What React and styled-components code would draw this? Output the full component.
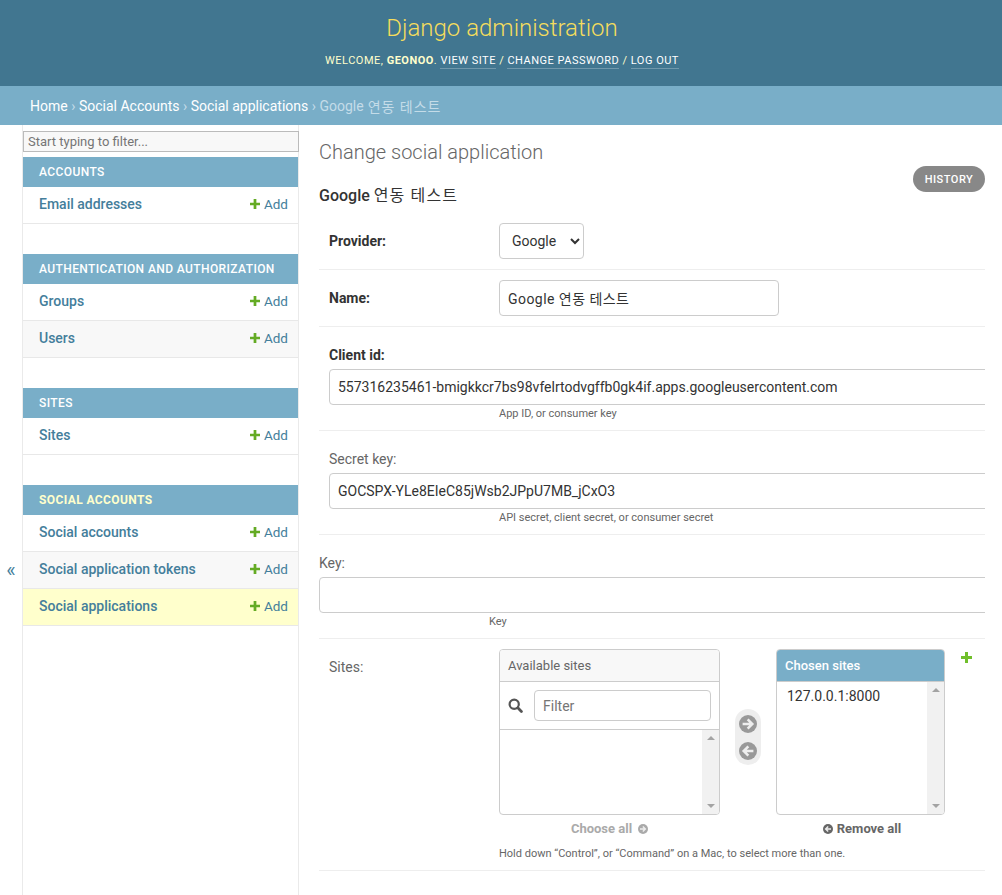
import React from 'react';
import styled, { createGlobalStyle } from 'styled-components';

const FONT = `Roboto, "Noto Sans CJK KR", "Lucida Grande", Verdana, Arial, sans-serif`;

const GlobalStyle = createGlobalStyle`
    html, body {
        margin: 0;
        height: 100%;
        overflow: hidden;
        background: #fff;
    }
    body, input, select {
        font-family: ${FONT};
        font-size: 14px;
        color: #333;
    }
    * {
        box-sizing: border-box;
    }
`;

const groups = [
    { title: 'Accounts', rows: ['Email addresses'] },
    { title: 'Authentication and Authorization', rows: ['Groups', 'Users'] },
    { title: 'Sites', rows: ['Sites'] },
    { title: 'Social Accounts', rows: ['Social accounts', 'Social application tokens', 'Social applications'], current: 'Social applications' },
];

const PlusIcon = ({ size = 10, color = '#64ab24' }) => (
    <svg width={size} height={size} viewBox="0 0 11 11" aria-hidden="true">
        <path d="M4 0h3v4h4v3H7v4H4V7H0V4h4z" fill={color} />
    </svg>
);

const SearchIcon = () => (
    <svg width="15" height="15" viewBox="0 0 15 15" aria-hidden="true">
        <circle cx="6.2" cy="6.2" r="4.6" fill="none" stroke="#555" strokeWidth="2.2" />
        <path d="M9.8 9.8l3.6 3.6" stroke="#555" strokeWidth="2.8" strokeLinecap="round" />
    </svg>
);

const ArrowCircle = ({ size = 18, color = '#999', left }) => (
    <svg width={size} height={size} viewBox="0 0 20 20" aria-hidden="true" style={{ transform: left ? 'scaleX(-1)' : undefined }}>
        <circle cx="10" cy="10" r="10" fill={color} />
        <path d="M4 10h10M9.6 4.8l5.2 5.2-5.2 5.2" fill="none" stroke="#eee" strokeWidth="2.8" />
    </svg>
);

const Header = styled.header`
    height: 86px;
    background: #417690;
    padding-top: 12px;
    padding-left: 2px;
    text-align: center;
`;

const Branding = styled.h1`
    margin: 0;
    font-size: 24px;
    line-height: 32px;
    font-weight: 300;
    color: #f5dd5d;
`;

const UserTools = styled.div`
    margin-top: 10px;
    font-size: 11px;
    line-height: 14px;
    letter-spacing: 0.5px;
    text-transform: uppercase;
    color: #ffc;
    strong {
        font-weight: 700;
    }
    a {
        color: #fff;
        border-bottom: 1px solid rgba(255, 255, 255, 0.25);
        padding-bottom: 1px;
    }
`;

const Breadcrumbs = styled.nav`
    height: 39px;
    background: #79aec8;
    padding: 0 30px;
    display: flex;
    align-items: center;
    font-size: 14px;
    color: #c4dce8;
    a {
        color: #fff;
    }
    i {
        font-style: normal;
        margin: 0 3.5px;
        color: #c4dce8;
    }
`;

const Korean = styled.span`
    margin-left: 4px;
    font-weight: 400;
    letter-spacing: 0.07em;
`;

const Body = styled.div`
    display: flex;
    height: calc(100vh - 125px);
`;

const ToggleColumn = styled.div`
    width: 22px;
    flex: none;
    display: flex;
    justify-content: center;
    align-items: center;
    color: #447e9b;
    font-size: 20px;
    padding-top: 119px;
`;

const Sidebar = styled.aside`
    width: 277px;
    flex: none;
    border-left: 1px solid #eaeaea;
    border-right: 1px solid #eaeaea;
    padding-top: 6px;
`;

const NavFilter = styled.input`
    display: block;
    width: 276px;
    height: 21px;
    margin: 0 0 5px;
    padding: 0 4px;
    font-size: 13px;
    background: #f8f8f8;
    border: 1px solid #bbb;
    border-radius: 0;
    outline: none;
    &::placeholder {
        color: #757575;
        opacity: 1;
    }
`;

const NavGroup = styled.section`
    margin-bottom: 30px;
`;

const Caption = styled.div`
    height: 30px;
    width: 275px;
    padding: 0 16px;
    display: flex;
    align-items: center;
    background: #79aec8;
    font-size: 12px;
    letter-spacing: 0.4px;
    text-transform: uppercase;
    font-weight: ${p => (p.$current ? 700 : 500)};
    color: ${p => (p.$current ? '#ffc' : '#fff')};
`;

const NavRow = styled.div`
    height: 37px;
    width: 275px;
    padding: 0 10px 3px 16px;
    display: flex;
    align-items: center;
    justify-content: space-between;
    color: #447e9b;
    border-bottom: 1px solid #e8e8e8;
    background: ${p => (p.$current ? '#ffc' : p.$alt ? '#f8f8f8' : '#fff')};
`;

const ModelLink = styled.span`
    font-weight: 500;
`;

const AddLink = styled.span`
    display: flex;
    align-items: center;
    gap: 4px;
    font-size: 13.5px;
    padding-top: 1px;
`;

const Content = styled.main`
    flex: 1;
    min-width: 0;
    padding: 15px 17px 0 20px;
    overflow: hidden;
`;

const TitleBar = styled.div`
    display: flex;
    justify-content: space-between;
    align-items: flex-start;
`;

const Title = styled.h1`
    margin: 0;
    font-size: 20px;
    line-height: 24px;
    font-weight: 300;
    color: #666;
`;

const Subtitle = styled.h2`
    margin: 22px 0 0;
    font-size: 16px;
    line-height: 20px;
    font-weight: 500;
    color: #333;
`;

const HistoryButton = styled.a`
    margin-top: 26px;
    width: 72px;
    height: 26px;
    border-radius: 13px;
    background: #888;
    color: #fff;
    font-size: 11px;
    font-weight: 500;
    letter-spacing: 0.5px;
    display: flex;
    align-items: center;
    justify-content: center;
`;

const FormRow = styled.div`
    padding: ${p => p.$pad || '10px'};
    border-bottom: 1px solid #eee;
    overflow: hidden;
    display: ${p => (p.$inline ? 'flex' : 'block')};
    align-items: center;
`;

const Label = styled.label`
    display: block;
    width: ${p => (p.$inline ? '170px' : 'auto')};
    flex: none;
    font-weight: ${p => (p.$required ? 700 : 400)};
    font-size: 14px;
    line-height: 16px;
    color: ${p => (p.$required ? '#333' : '#666')};
    margin-top: ${p => (p.$top ? '10px' : 0)};
    margin-bottom: ${p => (p.$inline ? 0 : '6px')};
`;

const Select = styled.select`
    height: 36px;
    width: 85px;
    padding: 0 4px 0 8px;
    font-size: 14px;
    background: #fff;
    border: 1px solid #ccc;
    border-radius: 4px;
`;

const TextInput = styled.input`
    display: block;
    height: 36px;
    width: ${p => p.$width || '700px'};
    padding: 0 8px;
    font-size: 14px;
    letter-spacing: ${p => p.$spacing || 'normal'};
    border: 1px solid #ccc;
    border-radius: 4px;
    outline: none;
`;

const Help = styled.div`
    margin: 2px 0 0 ${p => p.$left || '170px'};
    font-size: 11px;
    line-height: 13px;
    color: #666;
`;

const Selector = styled.div`
    display: flex;
    align-items: flex-start;
`;

const SelectorColumn = styled.div`
    width: ${p => p.$width};
`;

const Box = styled.div`
    height: 166px;
    border: 1px solid #ccc;
    border-radius: 4px;
    display: flex;
    flex-direction: column;
    overflow: hidden;
`;

const BoxTitle = styled.div`
    flex: none;
    height: 32px;
    padding: 0 8px;
    display: flex;
    align-items: center;
    font-size: 13px;
    border-bottom: 1px solid #ccc;
    background: ${p => (p.$chosen ? '#79aec8' : '#f8f8f8')};
    color: ${p => (p.$chosen ? '#fff' : '#666')};
    font-weight: ${p => (p.$chosen ? 500 : 400)};
`;

const FilterBar = styled.div`
    flex: none;
    height: 48px;
    padding: 0 8px;
    display: flex;
    align-items: center;
    gap: 11px;
    border-bottom: 1px solid #ccc;
`;

const FilterInput = styled.input`
    width: 177px;
    height: 31px;
    padding: 0 8px;
    font-size: 14px;
    border: 1px solid #ccc;
    border-radius: 4px;
    outline: none;
    &::placeholder {
        color: #757575;
        opacity: 1;
    }
`;

const ListArea = styled.div`
    flex: 1;
    min-height: 0;
    display: flex;
`;

const Items = styled.div`
    flex: 1;
    padding: 4px 10px;
    font-size: 14px;
    line-height: 20px;
    color: #333;
`;

const Scrollbar = styled.div`
    width: 17px;
    flex: none;
    background: #f1f1f1;
    display: flex;
    flex-direction: column;
    justify-content: space-between;
    align-items: center;
    padding: 6px 0;
`;

const Arrow = styled.span`
    width: 0;
    height: 0;
    border-left: 4px solid transparent;
    border-right: 4px solid transparent;
    border-${p => (p.$down ? 'top' : 'bottom')}: 4px solid #a3a3a3;
`;

const Mover = styled.div`
    width: 26px;
    height: 56px;
    margin: 60px 15px 0;
    border-radius: 13px;
    background: #eee;
    display: flex;
    flex-direction: column;
    align-items: center;
    justify-content: center;
    gap: 9px;
    flex: none;
`;

const ChooseLink = styled.div`
    margin-top: 6px;
    padding-left: ${p => (p.$off ? 0 : '3px')};
    display: flex;
    justify-content: center;
    align-items: center;
    gap: ${p => (p.$off ? '6px' : '4px')};
    font-size: 13px;
    line-height: 16px;
    font-weight: 700;
    color: ${p => (p.$off ? '#aaa' : '#666')};
`;

const AddAnother = styled.span`
    margin: 3px 0 0 16px;
    line-height: 0;
`;

const SelectorHelp = styled.div`
    margin: 10px 0 0 170px;
    font-size: 11px;
    line-height: 13px;
    color: #666;
`;

const Scroll = () => (
    <Scrollbar>
        <Arrow />
        <Arrow $down />
    </Scrollbar>
);

const App = () => {
    return (
        <>
            <GlobalStyle />
            <Header>
                <Branding>Django administration</Branding>
                <UserTools>
                    Welcome, <strong>geonoo</strong>. <a>View site</a> / <a>Change password</a> / <a>Log out</a>
                </UserTools>
            </Header>
            <Breadcrumbs>
                <a>Home</a><i>›</i><a>Social Accounts</a><i>›</i><a>Social applications</a><i>›</i>Google<Korean>연동 테스트</Korean>
            </Breadcrumbs>
            <Body>
                <ToggleColumn>«</ToggleColumn>
                <Sidebar>
                    <NavFilter placeholder="Start typing to filter..." />
                    {groups.map(group => (
                        <NavGroup key={group.title}>
                            <Caption $current={!!group.current}>{group.title}</Caption>
                            {group.rows.map((row, i) => (
                                <NavRow key={row} $alt={i % 2 === 1} $current={row === group.current}>
                                    <ModelLink>{row}</ModelLink>
                                    <AddLink><PlusIcon />Add</AddLink>
                                </NavRow>
                            ))}
                        </NavGroup>
                    ))}
                </Sidebar>
                <Content>
                    <TitleBar>
                        <div>
                            <Title>Change social application</Title>
                            <Subtitle>Google<Korean>연동 테스트</Korean></Subtitle>
                        </div>
                        <HistoryButton>HISTORY</HistoryButton>
                    </TitleBar>
                    <FormRow $inline $pad="17px 10px 10px">
                        <Label $inline $required>Provider:</Label>
                        <Select defaultValue="google"><option value="google">Google</option></Select>
                    </FormRow>
                    <FormRow $inline>
                        <Label $inline $required>Name:</Label>
                        <TextInput $width="280px" $spacing="0.45px" defaultValue="Google 연동 테스트" />
                    </FormRow>
                    <FormRow $pad="20px 0 10px 10px">
                        <Label $required>Client id:</Label>
                        <TextInput defaultValue="557316235461-bmigkkcr7bs98vfelrtodvgffb0gk4if.apps.googleusercontent.com" />
                        <Help>App ID, or consumer key</Help>
                    </FormRow>
                    <FormRow $pad="20px 0 10px 10px">
                        <Label>Secret key:</Label>
                        <TextInput defaultValue="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" />
                        <Help>API secret, client secret, or consumer secret</Help>
                    </FormRow>
                    <FormRow $pad="20px 0 10px 0">
                        <Label>Key:</Label>
                        <TextInput />
                        <Help>Key</Help>
                    </FormRow>
                    <FormRow $pad="10px 10px 10px">
                        <Selector>
                            <Label $inline $top>Sites:</Label>
                            <SelectorColumn $width="221px">
                                <Box>
                                    <BoxTitle>Available sites</BoxTitle>
                                    <FilterBar>
                                        <SearchIcon />
                                        <FilterInput placeholder="Filter" />
                                    </FilterBar>
                                    <ListArea>
                                        <Items />
                                        <Scroll />
                                    </ListArea>
                                </Box>
                                <ChooseLink $off>Choose all <ArrowCircle size={10} color="#aaa" /></ChooseLink>
                            </SelectorColumn>
                            <Mover>
                                <ArrowCircle />
                                <ArrowCircle left />
                            </Mover>
                            <SelectorColumn $width="169px">
                                <Box>
                                    <BoxTitle $chosen>Chosen sites</BoxTitle>
                                    <ListArea>
                                        <Items>127.0.0.1:8000</Items>
                                        <Scroll />
                                    </ListArea>
                                </Box>
                                <ChooseLink><ArrowCircle size={10} color="#666" left /> Remove all</ChooseLink>
                            </SelectorColumn>
                            <AddAnother><PlusIcon size={11} color="#70bf2b" /></AddAnother>
                        </Selector>
                        <SelectorHelp>Hold down “Control”, or “Command” on a Mac, to select more than one.</SelectorHelp>
                    </FormRow>
                </Content>
            </Body>
        </>
    );
};

export default App;
